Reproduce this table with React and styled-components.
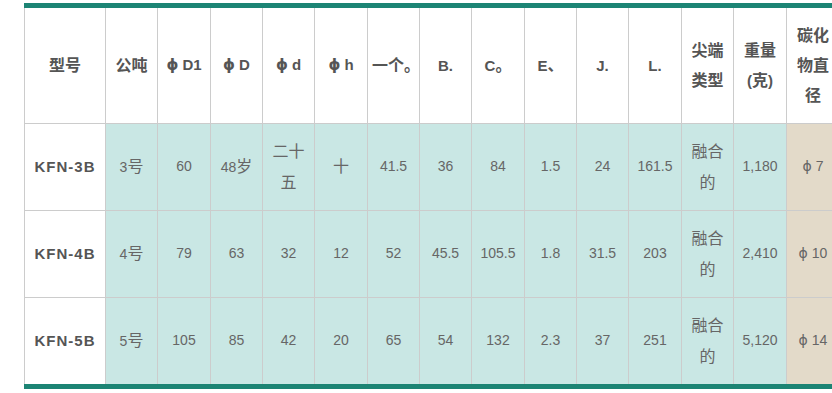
import React from "react";
import styled, { createGlobalStyle } from "styled-components";

const teal = "#1c8474";
const line = "#cccccc";

const GlobalStyle = createGlobalStyle`
  html, body {
    margin: 0;
    padding: 0;
    background: #fff;
    overflow: hidden;
  }
`;

const headers = [
  ["型号"], ["公吨"], ["ϕD1"], ["ϕD"], ["ϕd"], ["ϕh"], ["一个。"],
  ["B."], ["C。"], ["E、"], ["J."], ["L."],
  ["尖端", "类型"], ["重量", "(克)"], ["碳化", "物直", "径"],
];

const widths = [81, 52, 53, 52, 52, 53, 52, 52, 53, 52, 52, 53, 52, 53, 53];

const rows = [
  ["KFN-3B", "3号", "60", "48岁", ["二十", "五"], "十", "41.5", "36", "84", "1.5", "24", "161.5", ["融合", "的"], "1,180", "ϕ7"],
  ["KFN-4B", "4号", "79", "63", "32", "12", "52", "45.5", "105.5", "1.8", "31.5", "203", ["融合", "的"], "2,410", "ϕ10"],
  ["KFN-5B", "5号", "105", "85", "42", "20", "65", "54", "132", "2.3", "37", "251", ["融合", "的"], "5,120", "ϕ14"],
];

const hanRe = /[\u3000-\u30ff\u4e00-\u9fff]/;

// split Han runs and the diameter sign out so each gets its own font
function Txt({ lines }) {
  const list = Array.isArray(lines) ? lines : [lines];
  return list.map((l, i) => (
    <React.Fragment key={i}>
      {i > 0 && <br />}
      {l.split(/([\u3000-\u30ff\u4e00-\u9fff]+|ϕ)/).map((part, j) => {
        if (part === "ϕ") return <Phi key={j}>{part}</Phi>;
        if (hanRe.test(part)) return <Han key={j}>{part}</Han>;
        return part;
      })}
    </React.Fragment>
  ));
}

export default function App() {
  return (
    <>
      <GlobalStyle />
      <Page>
        <Frame>
          <Table>
            <colgroup>
              {widths.map((w, i) => <Col key={i} $w={w} />)}
            </colgroup>
            <thead>
              <HeadRow>
                {headers.map((h, i) => (
                  <Th key={i}><Txt lines={h} /></Th>
                ))}
              </HeadRow>
            </thead>
            <tbody>
              {rows.map((r, ri) => (
                <Row key={ri} $last={ri === rows.length - 1}>
                  {r.map((c, ci) => (
                    <Td
                      key={ci}
                      $kind={ci === 0 ? "name" : ci === r.length - 1 ? "beige" : "teal"}
                    >
                      <Txt lines={c} />
                    </Td>
                  ))}
                </Row>
              ))}
            </tbody>
          </Table>
        </Frame>
      </Page>
    </>
  );
}

const Page = styled.div`
  padding: 3px 0 0 24px;
  width: 900px;
`;

const Frame = styled.div`
  width: 815px;
  border-top: 5px solid ${teal};
  border-bottom: 5px solid ${teal};
`;

const Table = styled.table`
  width: 815px;
  border-collapse: collapse;
  table-layout: fixed;
  font-family: "Liberation Sans", "Noto Sans CJK SC", sans-serif;
`;

const Col = styled.col`
  width: ${(p) => p.$w}px;
`;

const Han = styled.span`
  font-family: "Noto Sans CJK SC", sans-serif;
  font-size: 16px;
`;

const Phi = styled.span`
  font-family: "DejaVu Sans", sans-serif;
  margin-right: 4px;
`;

const HeadRow = styled.tr`
  height: 115px;
`;

const Th = styled.th`
  border: 1px solid ${line};
  border-top: none;
  padding: 0 4px;
  font-size: 15px;
  font-weight: bold;
  line-height: 29px;
  color: #555;
  text-align: center;
  vertical-align: middle;
  white-space: nowrap;
  background: #fff;
`;

const Row = styled.tr`
  height: 87px;
  td {
    border-bottom: ${(p) => (p.$last ? "none" : `1px solid ${line}`)};
  }
`;

const bg = { name: "#ffffff", teal: "#c9e7e4", beige: "#e3dac9" };

const Td = styled.td`
  border: 1px solid ${line};
  padding: 0 4px;
  font-size: ${(p) => (p.$kind === "name" ? "15px" : "14px")};
  font-weight: ${(p) => (p.$kind === "name" ? "bold" : "normal")};
  letter-spacing: ${(p) => (p.$kind === "name" ? "1px" : "0")};
  line-height: 29px;
  color: ${(p) => (p.$kind === "name" ? "#555" : "#666")};
  text-align: center;
  vertical-align: middle;
  white-space: nowrap;
  background: ${(p) => bg[p.$kind]};
`;
